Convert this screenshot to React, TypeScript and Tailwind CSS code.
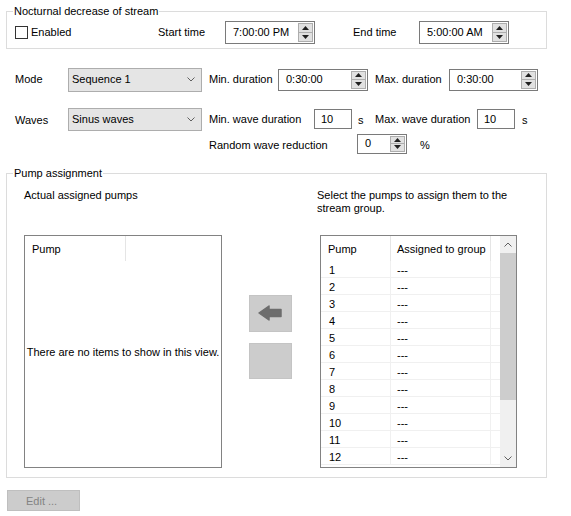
import React from 'react';

// stream group settings panel

function SpinArrows() {
  return (
    <div className="flex flex-col h-full py-[1px] mr-[1px]">
      <div className="flex-1 w-[15px] flex items-center justify-center bg-[#e1e1e1] border border-[#adadad]">
        <svg width="7" height="4" viewBox="0 0 7 4">
          <polygon points="3.5,0 7,4 0,4" fill="#202020" />
        </svg>
      </div>
      <div className="flex-1 w-[15px] flex items-center justify-center bg-[#e1e1e1] border border-t-0 border-[#adadad]">
        <svg width="7" height="4" viewBox="0 0 7 4">
          <polygon points="0,0 7,0 3.5,4" fill="#202020" />
        </svg>
      </div>
    </div>
  );
}

function Spinner({ value, className }: { value: string; className: string }) {
  return (
    <div className={`flex items-center border border-[#7a7a7a] bg-white ${className}`}>
      <span className="flex-1 pl-[7px]">{value}</span>
      <SpinArrows />
    </div>
  );
}

function TextBox({ value, className }: { value: string; className: string }) {
  return (
    <div className={`flex items-center border border-[#7a7a7a] bg-white pl-[6px] ${className}`}>
      {value}
    </div>
  );
}

function Chevron({ up }: { up?: boolean }) {
  return (
    <svg width="8" height="5" viewBox="0 0 8 5">
      <polyline
        points={up ? '0.5,4.5 4,1 7.5,4.5' : '0.5,0.5 4,4 7.5,0.5'}
        fill="none"
        stroke="#606060"
        strokeWidth="1"
      />
    </svg>
  );
}

function Select({ value, className }: { value: string; className: string }) {
  return (
    <div className={`flex items-center border border-[#adadad] bg-[#e5e5e5] pl-[3px] pr-[6px] ${className}`}>
      <span className="flex-1">{value}</span>
      <Chevron />
    </div>
  );
}

const pumps = ['1', '2', '3', '4', '5', '6', '7', '8', '9', '10', '11', '12'];

export default function App() {
  return (
    <div className="w-[571px] h-[516px] overflow-hidden bg-white text-black text-[11px] leading-[13px] font-['Liberation_Sans',Arial,sans-serif] pt-[4px]">
      <fieldset className="ml-[6px] w-[541px] border border-[#dcdcdc] pl-[6px] pb-[4px]">
        <legend className="px-[1px] leading-[14px]">Nocturnal decrease of stream</legend>
        <div className="flex items-center mt-[3px] h-[23px]">
          <div className="w-[145px] flex items-center">
            <div className="ml-[2px] w-[13px] h-[13px] border border-[#333333] bg-white" />
            <span className="ml-[3px]">Enabled</span>
          </div>
          <span className="w-[67px]">Start time</span>
          <Spinner value="7:00:00 PM" className="w-[90px] h-[23px]" />
          <span className="ml-[38px] w-[66px]">End time</span>
          <Spinner value="5:00:00 AM" className="w-[90px] h-[23px]" />
        </div>
      </fieldset>

      <div className="pl-[15px] mt-[18px]">
        <div className="flex items-center h-[25px]">
          <span className="w-[53px]">Mode</span>
          <Select value="Sequence 1" className="w-[134px] h-[24px]" />
          <span className="ml-[7px] w-[69px]">Min. duration</span>
          <Spinner value="0:30:00" className="w-[90px] h-[22px]" />
          <span className="ml-[7px] w-[74px]">Max. duration</span>
          <Spinner value="0:30:00" className="w-[89px] h-[22px]" />
        </div>
        <div className="flex items-center h-[24px] mt-[15px]">
          <span className="w-[53px] pt-[2px]">Waves</span>
          <Select value="Sinus waves" className="w-[134px] h-[23px]" />
          <span className="ml-[7px] w-[105px]">Min. wave duration</span>
          <TextBox value="10" className="w-[38px] h-[20px]" />
          <span className="ml-[6px] w-[17px] pt-[2px]">s</span>
          <span className="w-[102px]">Max. wave duration</span>
          <TextBox value="10" className="w-[38px] h-[20px]" />
          <span className="ml-[7px] pt-[3px]">s</span>
        </div>
        <div className="flex items-center h-[21px] mt-[2px]">
          <span className="ml-[194px] w-[148px] pt-[3px]">Random wave reduction</span>
          <Spinner value="0" className="w-[50px] h-[20px]" />
          <span className="ml-[13px] pt-[3px]">%</span>
        </div>
      </div>

      <fieldset className="ml-[6px] mt-[12px] w-[541px] border border-[#dcdcdc] pl-[6px] pb-[9px]">
        <legend className="px-[1px] leading-[14px]">Pump assignment</legend>
        <div className="flex mt-[8px]">
          <div className="ml-[11px] w-[198px]">
            <div className="h-[47px] pt-[1px]">Actual assigned pumps</div>
            <div className="relative h-[233px] border border-[#828282] bg-white">
              <div className="flex h-[25px]">
                <div className="w-[101px] flex items-center pl-[7px] pt-[2px] border-r border-[#e5e5e5]">Pump</div>
              </div>
              <div className="absolute inset-0 flex items-center justify-center pt-[1px]">
                There are no items to show in this view.
              </div>
            </div>
          </div>

          <div className="ml-[27px] w-[43px] pt-[107px]">
            <div className="w-[43px] h-[37px] bg-[#cccccc] border border-[#c4c4c4]">
              <svg width="41" height="35" viewBox="0 0 41 35">
                <path d="M9 17 L19 10 L19 13.5 L31 13.5 L31 20.5 L19 20.5 L19 24 Z" fill="#6d6d6d" stroke="#6d6d6d" strokeWidth="1.5" strokeLinejoin="round" />
              </svg>
            </div>
            <div className="mt-[11px] w-[43px] h-[36px] bg-[#cccccc] border border-[#c4c4c4]" />
          </div>

          <div className="ml-[28px] w-[197px]">
            <div className="h-[47px] -ml-[3px] pt-[1px]">
              Select the pumps to assign them to the
              <br />
              stream group.
            </div>
            <div className="flex h-[233px] border border-[#828282] bg-white">
              <div className="w-[179px]">
                <div className="flex h-[25px]">
                  <div className="w-[70px] flex items-center pl-[7px] pt-[2px] border-r border-[#e5e5e5]">Pump</div>
                  <div className="w-[100px] flex items-center pl-[6px] pt-[2px] border-r border-[#e5e5e5]">Assigned to group</div>
                </div>
                {pumps.map((p) => (
                  <div key={p} className="flex h-[17px] border-b border-[#f0f0f0]">
                    <div className="w-[70px] flex items-center pl-[8px] pt-[2px] border-r border-[#f0f0f0]">{p}</div>
                    <div className="w-[100px] flex items-center pl-[6px] pt-[2px] border-r border-[#f0f0f0]">---</div>
                  </div>
                ))}
              </div>
              <div className="w-[16px] flex flex-col bg-[#f0f0f0]">
                <div className="h-[17px] flex items-center justify-center">
                  <Chevron up />
                </div>
                <div className="h-[147px] bg-[#cdcdcd]" />
                <div className="flex-1" />
                <div className="h-[17px] flex items-center justify-center">
                  <Chevron />
                </div>
              </div>
            </div>
          </div>
        </div>
      </fieldset>

      <div className="ml-[7px] mt-[12px] w-[73px] h-[21px] flex items-center pl-[18px] pt-[1px] bg-[#cccccc] border border-[#bfbfbf] text-[#838383]">
        Edit ...
      </div>
    </div>
  );
}
